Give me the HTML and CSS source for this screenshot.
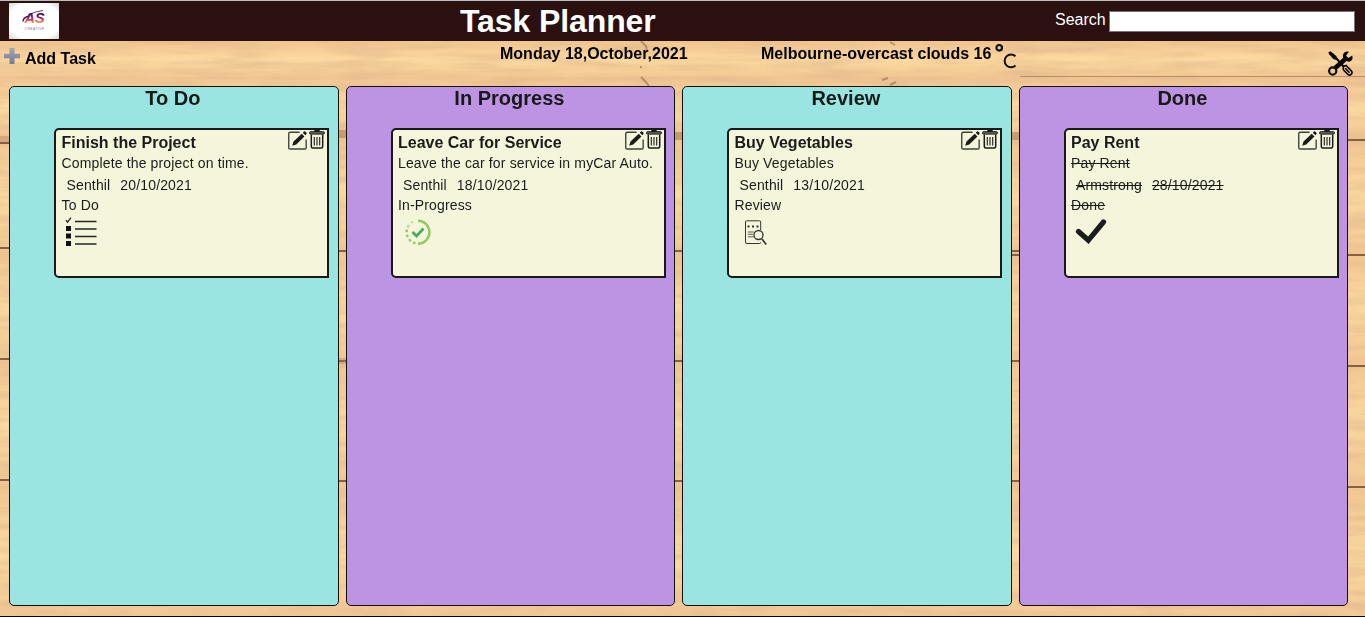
FILE: index.html
```html
<!DOCTYPE html>
<html lang="en">
<head>
<meta charset="utf-8">
<title>Task Planner</title>
<link rel="stylesheet" href="styles.css">
</head>
<body>
<svg class="wood" viewBox="0 0 1365 617" aria-hidden="true">
  <defs>
    <filter id="grain" x="0" y="0" width="100%" height="100%">
      <feTurbulence type="fractalNoise" baseFrequency="0.015 0.13" numOctaves="4" seed="8"/>
      <feColorMatrix values="0 0 0 0 .72  0 0 0 0 .46  0 0 0 0 .25  1.1 0 0 0 -.38"/>
    </filter>
    <linearGradient id="plank" x2="0" y2="1"><stop stop-color="#f0c591"/><stop offset=".5" stop-color="#fdd9a0"/><stop offset="1" stop-color="#f2c995"/></linearGradient>
    <filter id="soft" filterUnits="userSpaceOnUse" x="0" y="0" width="1365" height="617"><feGaussianBlur stdDeviation=".7"/></filter>
  </defs>
  <rect width="1365" height="617" fill="#f6d099"/>
  <g fill="url(#plank)"><rect y="41" width="1365" height="36"/><rect y="77" width="1365" height="58"/><rect y="135" width="1365" height="116"/><rect y="251" width="1365" height="110"/><rect y="361" width="1365" height="120"/><rect y="481" width="1365" height="136"/></g>
  <rect width="1365" height="617" filter="url(#grain)"/>
  <g stroke="#87603f" stroke-width="2" fill="none" filter="url(#soft)">
    <path d="M0 143H10M0 248H10M0 359H10M0 480H10M338 251H1020M338 361H1020M338 481H1020M1011 255H1365M1347 366H1365M1347 487H1365M1347 140H1365"/>
    <path stroke="#a8764f" stroke-width="8" opacity=".55" d="M338 134H347M674 136H683M1011 136H1020"/>
    <path stroke="#a8764f" stroke-width="6" opacity=".35" d="M0 139H10M338 361H347"/>
    <path stroke-width="1" opacity=".55" d="M1020 76.5H1365"/>
    <path stroke="#9b6844" stroke-width="2" opacity=".6" d="M641 41l5 5 1 5M640 67h2M641 77l4 4 4 5M890 42l5 3M882 80l6-2M890 85l6-3"/>
  </g>
</svg>
<svg class="sprite" aria-hidden="true">
  <symbol id="edit" viewBox="0 0 18 18"><path d="M11 1.2H2Q.7 1.2.7 2.7v13.1q0 1.3 1.3 1.3h14q1.2 0 1.2-1.3V8" fill="none" stroke="#40413c" stroke-width="1.3"/><path d="M4 14l1.2-4L13 2.5l2.6 2.6-7.8 7.7zM14 1.6L15.1.5q.6-.5 1.2 0l1.2 1.2q.5.6 0 1.2l-1.1 1.1z" fill="#1b1c19"/></symbol>
  <symbol id="trash" viewBox="0 0 16 19"><path d="M5.3 0h5.4v2H5.3z" fill="#1b1c19"/><rect x=".6" y="1.7" width="14.8" height="2.4" rx=".8" fill="#66675f" stroke="#1b1c19"/><path d="M2.3 4.5v12q0 1.5 1.5 1.5h8.4q1.5 0 1.5-1.5v-12" fill="none" stroke="#1b1c19" stroke-width="1.5"/><path d="M5.3 7v8.5M8 7v8.5M10.7 7v8.5" fill="none" stroke="#1b1c19" stroke-width="1.1"/></symbol>
</svg>
<header class="topbar">
  <svg class="logo" viewBox="0 0 50 36">
    <defs><radialGradient id="paper" r=".72"><stop offset=".72" stop-color="#fff"/><stop offset="1" stop-color="#cfcfcf"/></radialGradient><linearGradient id="ink" x2="0" y2="1"><stop offset=".25" stop-color="#341444"/><stop offset=".55" stop-color="#a61d72"/><stop offset=".8" stop-color="#ff8b3d"/></linearGradient></defs>
    <rect width="50" height="36" fill="url(#paper)"/>
    <text class="monogram" x="15.5" y="19.5" fill="url(#ink)">AS</text>
    <path d="M14 18.5q0-4 6-5.5" fill="none" stroke="#482054" stroke-width="1.4"/><path d="M19 12q7-3.5 15-4.5" fill="none" stroke="#482054" stroke-width=".9"/>
    <text class="logo-caption" x="15.5" y="27.3">CREATIVE</text>
  </svg>
  <h1>Task Planner</h1>
  <label class="search">Search<input type="text"></label>
</header>
<div class="toolbar">
  <div class="add"><svg width="17" height="17" viewBox="0 0 17 17"><defs><linearGradient id="plus" x2="0" y2="1"><stop stop-color="#a3a6b4"/><stop offset="1" stop-color="#737b99"/></linearGradient></defs><path d="M5.5 0h5v5.7H16v4.6h-5.5V16h-5v-5.7H0V5.7h5.5z" fill="url(#plus)"/></svg>Add Task</div>
  <div class="date">Monday 18,October,2021</div>
  <div class="weather">Melbourne-overcast clouds 16<svg width="22" height="26" viewBox="0 0 22 26"><g fill="none" stroke="#111"><circle cx="4.2" cy="3.8" r="2.8" stroke-width="2.1"/><path d="M20.5 12.3a6.4 6.4 0 1 0 0 9.2" stroke-width="2"/></g></svg></div>
  <svg class="tools" viewBox="0 0 25 25"><path d="M2.5 2.5L8 7l8 9" stroke="#080808" stroke-width="2" fill="none"/><path d="M.5 1.2L2.5.3l5.8 4.7 1 3-1 1-3-1L.8 3z"/><path d="M7.2 17L18.5 7" stroke="#080808" stroke-width="4.5"/><circle cx="4.7" cy="20" r="3.6" fill="none" stroke="#080808" stroke-width="2.1"/><path d="M21 .7l-3 4 2.4 2.4 3.8-2.7q1.2 3.9-1.4 5.6-2.5 1.5-4.9-.4l-2.5-2.7Q14 3.8 16.3 1.6q2-1.7 4.7-.9z"/><path d="M15.3 15.4l2.7-1 5.4 5.6q1.4 2-.3 3.4-1.7 1.4-3.5-.2l-4.3-4.6zM17.3 17.3l4.2 4.4" fill="none" stroke="#080808" stroke-width="1.6"/></svg>
</div>
<main class="board">
  <section class="column teal"><h2>To Do</h2>
    <article class="card"><div class="actions"><svg class="edit"><use href="#edit"/></svg><svg class="trash"><use href="#trash"/></svg></div>
      <h3>Finish the Project</h3><p>Complete the project on time.</p><p class="meta"><span>Senthil</span><span>20/10/2021</span></p><p>To Do</p>
      <svg class="status" viewBox="0 0 45 32"><path d="M4 4.2l1.5 2L9 1.7" fill="none" stroke="#1b1c19" stroke-width="1.2"/><path d="M4 10h5v5H4zM4 17.5h5v5H4zM4 25h5v5H4z" fill="#111"/><path d="M13 5.5h21.5M13 13h21.5M13 20.5h21.5M13 28h21.5" stroke="#252622" stroke-width="1.4"/></svg>
    </article></section>
  <section class="column purple"><h2>In Progress</h2>
    <article class="card"><div class="actions"><svg class="edit"><use href="#edit"/></svg><svg class="trash"><use href="#trash"/></svg></div>
      <h3>Leave Car for Service</h3><p>Leave the car for service in myCar Auto.</p><p class="meta"><span>Senthil</span><span>18/10/2021</span></p><p>In-Progress</p>
      <svg class="status" viewBox="0 0 45 32"><path d="M20 4.7a11.5 11.5 0 0 1 0 23" fill="none" stroke="#91ca60" stroke-width="2.4"/><path d="M17.5 27.3A11.5 11.5 0 0 1 17.5 4.9" fill="none" stroke="#91ca60" stroke-width="2.4" stroke-dasharray="2.6 2.5"/><path d="M9 9l9-5" stroke="#f5f5dc" stroke-width="5" opacity=".55"/><path d="M14.5 16l4 4 7-7.5" fill="none" stroke="#4dab61" stroke-width="2.8"/></svg>
    </article></section>
  <section class="column teal"><h2>Review</h2>
    <article class="card"><div class="actions"><svg class="edit"><use href="#edit"/></svg><svg class="trash"><use href="#trash"/></svg></div>
      <h3>Buy Vegetables</h3><p>Buy Vegetables</p><p class="meta"><span>Senthil</span><span>13/10/2021</span></p><p>Review</p>
      <svg class="status" viewBox="0 0 45 32"><g fill="none" stroke="#33342f"><path d="M25.7 14V6q0-1.2-1.2-1.2H11.7q-1.2 0-1.2 1.2v20q0 1.5 1.5 1.5h12.5q1.2 0 1.2-1.2" stroke-width="1"/><path d="M12.5 10.5h2m2.5 0h2m2.5 0h2" stroke-width="2"/><path d="M12.8 16h6M12.8 18.3h5M12.8 20.8h6" stroke-width=".8"/><circle cx="23.5" cy="19" r="4.5" stroke-width="1.3"/><path d="M27 23l4.2 5.4" stroke-width="1.7"/></g></svg>
    </article></section>
  <section class="column purple"><h2>Done</h2>
    <article class="card done"><div class="actions"><svg class="edit"><use href="#edit"/></svg><svg class="trash"><use href="#trash"/></svg></div>
      <h3>Pay Rent</h3><p>Pay Rent</p><p class="meta"><span>Armstrong</span><span>28/10/2021</span></p><p>Done</p>
      <svg class="status" viewBox="0 0 45 32"><path d="M7.5 15.5L17.3 24.3 32.5 6" fill="none" stroke="#1b1c1b" stroke-width="5.2" stroke-linecap="round"/></svg>
    </article></section>
</main>
</body>
</html>
```
FILE: styles.css
```css
* { box-sizing: border-box; }
body {
  margin: 0;
  height: 617px;
  display: flex;
  flex-direction: column;
  position: relative;
  overflow: hidden;
  border-bottom: 1px solid #000;
  font-family: "Liberation Sans", Arial, sans-serif;
  color: #000;
}
h1, h2, h3, p { margin: 0; }
.wood { position: absolute; inset: 0; width: 1365px; height: 617px; z-index: -1; }
.sprite { position: absolute; width: 0; height: 0; }
.topbar {
  height: 41px;
  display: grid;
  grid-template-columns: 451px 595px 300px;
  padding: 2px 10px 2px 9px;
  border-top: 1px solid #bdbdbd;
  background: #2a100e;
  color: #fff;
}
.logo { width: 50px; height: 36px; }
.monogram { font: italic bold 14.5px "Liberation Sans", sans-serif; }
.logo-caption { font-size: 3.3px; letter-spacing: .5px; fill: #777; }
h1 { font-size: 32px; line-height: 37px; letter-spacing: -.1px; white-space: nowrap; }
.search { display: flex; align-items: flex-start; gap: 3px; line-height: 34px; font-size: 16px; }
.search input { flex: 1; min-width: 0; height: 21px; margin-top: 8px; border: 1px solid #767676; background: #fff; }
.toolbar {
  height: 45px;
  display: grid;
  grid-template-columns: 496px 261px 567px 25px;
  padding-left: 4px;
  font-weight: bold;
  font-size: 16px;
}
.add { display: flex; gap: 4px; padding-top: 7px; line-height: 21px; }
.date, .weather { line-height: 25px; }
.weather { display: flex; gap: 4px; }
.weather svg { margin-top: 3px; }
.tools { width: 25px; height: 25px; margin-top: 10px; fill: #080808; }
.board { display: grid; grid-template-columns: repeat(4, 329.75px); gap: 6.75px; padding-left: 9px; }
.column { height: 520px; border: 1px solid #111; border-radius: 5px; padding-left: 44px; }
.teal { background: #9ae5e2; }
.purple { background: #bd93e4; }
h2 { margin: 0 2px 0 -44px; height: 41px; font-size: 20px; line-height: 23px; text-align: center; color: #181a18; }
.card {
  position: relative;
  width: 275.4px;
  height: 150px;
  padding: 3px 5.5px;
  border: 2px solid #191a18;
  border-radius: 5px 0 0 5px;
  background: #f5f5dc;
  color: #1b1c19;
  font-size: 14px;
  letter-spacing: .15px;
}
.actions { position: absolute; top: 0; right: 2px; display: flex; gap: 2px; }
.edit { width: 19px; height: 19px; margin-top: 1px; }
.trash { width: 16px; height: 19px; }
h3 { font-size: 16px; line-height: 19px; letter-spacing: 0; }
.card p { line-height: 20px; margin-top: 1px; white-space: nowrap; }
.card .meta { display: flex; gap: 10px; padding-left: 5px; margin-top: 2px; }
.card .meta + p { margin-top: 0; }
.status { display: block; width: 45px; height: 32px; margin-top: 1px; }
.done p, .done span { text-decoration: line-through; }
.done .meta { text-decoration: none; }
```
